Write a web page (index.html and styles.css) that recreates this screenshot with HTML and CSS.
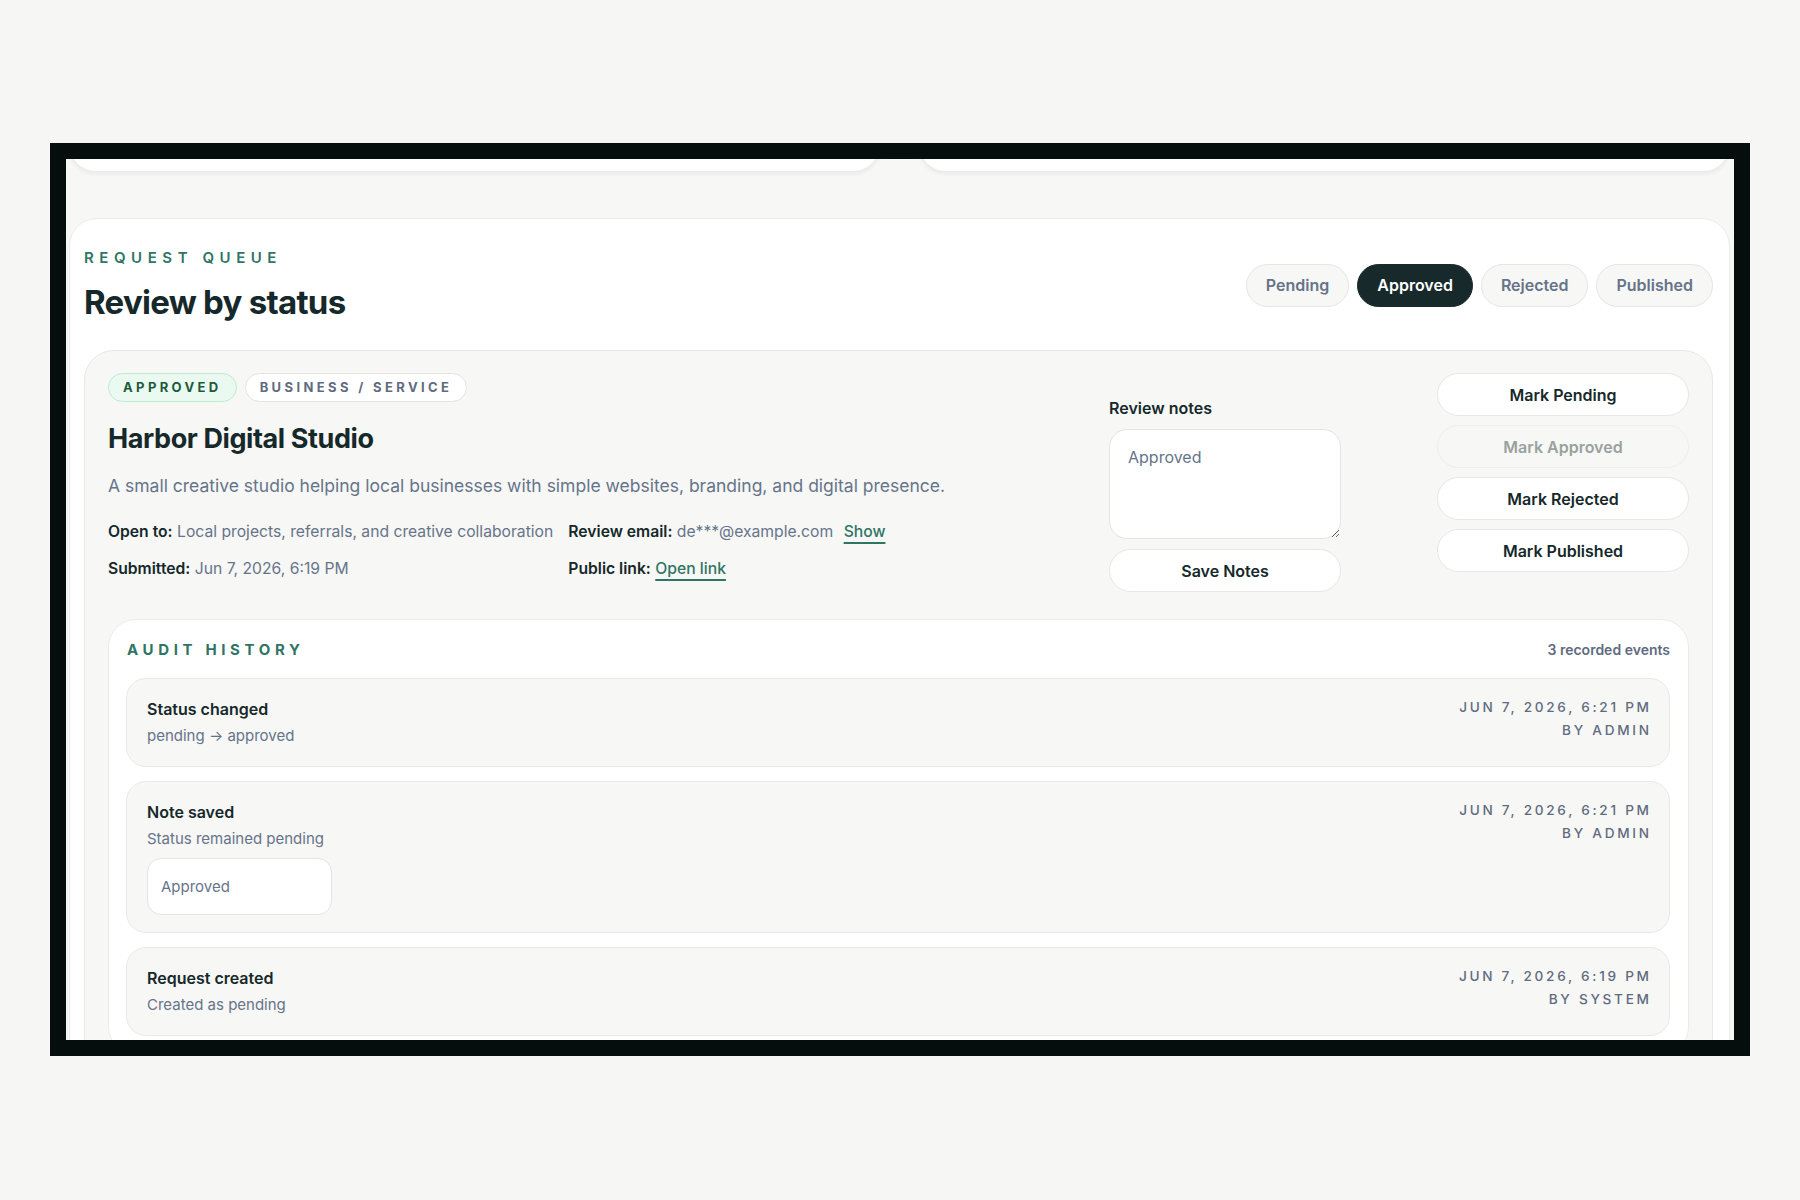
FILE: index.html
```html
<!DOCTYPE html>
<html lang="en">
<head>
  <meta charset="UTF-8">
  <meta name="viewport" content="width=device-width, initial-scale=1.0">
  <title>Request queue – Review by status</title>
  <link rel="stylesheet" href="styles.css">
</head>
<body>
  <div class="frame">
    <div class="viewport">
      <div class="top-cards">
        <div class="stub"></div>
        <div class="stub"></div>
      </div>

      <section class="panel">
        <header class="panel-head">
          <div>
            <p class="eyebrow">Request queue</p>
            <h1>Review by status</h1>
          </div>
          <nav class="tabs">
            <button class="tab">Pending</button>
            <button class="tab active">Approved</button>
            <button class="tab">Rejected</button>
            <button class="tab">Published</button>
          </nav>
        </header>

        <article class="request">
          <div class="request-main">
            <div class="request-info">
              <div class="badges">
                <span class="badge badge-green">Approved</span>
                <span class="badge">Business / Service</span>
              </div>
              <h2>Harbor Digital Studio</h2>
              <p class="desc">A small creative studio helping local businesses with simple websites, branding, and digital presence.</p>
              <div class="meta">
                <div><b>Open to:</b> Local projects, referrals, and creative collaboration</div>
                <div><b>Review email:</b> de***@example.com <a href="#" class="link show">Show</a></div>
                <div><b>Submitted:</b> Jun 7, 2026, 6:19 PM</div>
                <div><b>Public link:</b> <a href="#" class="link">Open link</a></div>
              </div>
            </div>

            <div class="notes">
              <label for="notes">Review notes</label>
              <textarea id="notes">Approved</textarea>
              <button class="btn">Save Notes</button>
            </div>

            <div class="actions">
              <button class="btn">Mark Pending</button>
              <button class="btn" disabled>Mark Approved</button>
              <button class="btn">Mark Rejected</button>
              <button class="btn">Mark Published</button>
            </div>
          </div>

          <div class="audit">
            <div class="audit-head">
              <span class="audit-title">Audit history</span>
              <span class="audit-count">3 recorded events</span>
            </div>
            <div class="events">
              <div class="event">
                <div>
                  <div class="event-title">Status changed</div>
                  <div class="event-sub">pending → approved</div>
                </div>
                <div class="event-time">
                  <div>Jun 7, 2026, 6:21 PM</div>
                  <div>by admin</div>
                </div>
              </div>
              <div class="event">
                <div>
                  <div class="event-title">Note saved</div>
                  <div class="event-sub">Status remained pending</div>
                  <div class="note-box">Approved</div>
                </div>
                <div class="event-time">
                  <div>Jun 7, 2026, 6:21 PM</div>
                  <div>by admin</div>
                </div>
              </div>
              <div class="event">
                <div>
                  <div class="event-title">Request created</div>
                  <div class="event-sub">Created as pending</div>
                </div>
                <div class="event-time">
                  <div>Jun 7, 2026, 6:19 PM</div>
                  <div>by system</div>
                </div>
              </div>
            </div>
          </div>
        </article>
      </section>
    </div>
  </div>
</body>
</html>
```

FILE: styles.css
```css
body {
  margin: 0;
  background-color: #f6f7f4;
  font-family: Inter, "Noto Sans", sans-serif;
  color: #15282a;
}

/* dark frame around the captured page */
.frame {
  box-sizing: border-box;
  width: 1700px;
  height: 913px;
  margin: 143px 0 0 50px;
  border: 16px solid #060d0d;
  overflow: hidden;
}
.viewport {
  height: 100%;
  background-color: #f7f7f5;
  padding: 0 4px 0 3px;
  overflow: hidden;
}

.top-cards {
  display: grid;
  grid-template-columns: 1fr 1fr;
  gap: 39px;
  margin-top: -40px;
}
.stub {
  height: 51px;
  background-color: #fff;
  border: 1px solid #ebebe8;
  border-radius: 28px;
  box-shadow: 0 2px 4px rgba(20, 30, 30, 0.06);
}

.panel {
  margin-top: 46px;
  background-color: #fff;
  border: 1px solid #ebebe7;
  border-radius: 28px;
  padding: 29px 16px 0 14px;
}
.panel-head {
  display: flex;
  justify-content: space-between;
  align-items: center;
}
.eyebrow {
  margin: 0 0 14px;
  font-size: 15px;
  line-height: 20px;
  font-weight: 600;
  letter-spacing: 0.37em;
  text-transform: uppercase;
  color: #2f7566;
}
h1 {
  margin: 0;
  font-size: 33px;
  line-height: 40px;
  font-weight: 700;
  letter-spacing: -0.022em;
}
.tabs {
  display: flex;
  gap: 8px;
}
.tab {
  font-family: inherit;
  font-size: 16px;
  line-height: 23px;
  font-weight: 600;
  padding: 9px 19px;
  border: 1px solid #e4e6e2;
  border-radius: 22px;
  background-color: #f7f7f5;
  color: #667389;
}
.tab.active {
  background-color: #17292b;
  border-color: #17292b;
  color: #fff;
}

.request {
  margin-top: 28px;
  background-color: #f7f7f5;
  border: 1px solid #e8e9e5;
  border-radius: 30px;
  padding: 22px 23px 24px;
}
.request-main {
  display: grid;
  grid-template-columns: minmax(0, 1fr) 232px 252px;
  column-gap: 96px;
  align-items: start;
}
.badges {
  display: flex;
  gap: 8px;
}
.badge {
  padding: 5px 14px;
  font-size: 13px;
  line-height: 17px;
  font-weight: 700;
  letter-spacing: 0.26em;
  text-transform: uppercase;
  color: #5f6b80;
  background-color: #fff;
  border: 1px solid #e3e5e1;
  border-radius: 16px;
}
.badge-green {
  color: #1d5a3c;
  background-color: #ebfaf1;
  border-color: #b9ecd0;
}
h2 {
  margin: 20px 0 0;
  font-size: 27px;
  line-height: 34px;
  font-weight: 700;
  letter-spacing: -0.015em;
}
.desc {
  margin: 16px 0 0;
  font-size: 17.5px;
  line-height: 28px;
  color: #66748a;
}
.meta {
  display: grid;
  grid-template-columns: auto auto;
  justify-content: start;
  column-gap: 15px;
  row-gap: 13px;
  margin-top: 20px;
  font-size: 15.7px;
  line-height: 24px;
  color: #66748a;
}
.meta b {
  font-weight: 600;
  color: #15282a;
}
.link {
  color: #2f7566;
  font-weight: 500;
  text-decoration: underline;
  text-decoration-thickness: 2px;
  text-underline-offset: 5px;
}
.show {
  margin-left: 6px;
}

.notes {
  padding-top: 23px;
}
.notes label {
  display: block;
  margin-bottom: 9px;
  font-size: 16px;
  line-height: 24px;
  font-weight: 600;
}
.notes textarea {
  display: block;
  box-sizing: border-box;
  width: 100%;
  height: 110px;
  padding: 15px 18px;
  font-family: inherit;
  font-size: 16px;
  line-height: 24px;
  color: #66748a;
  background-color: #fff;
  border: 1px solid #e3e5e1;
  border-radius: 18px;
}
.btn {
  display: block;
  width: 100%;
  height: 43px;
  font-family: inherit;
  font-size: 16px;
  font-weight: 600;
  color: #15282a;
  background-color: #fff;
  border: 1px solid #e6e8e4;
  border-radius: 22px;
}
.btn:disabled {
  background-color: #f7f7f5;
  border-color: #eeefeb;
  color: #9aa1a1;
}
.notes .btn {
  margin-top: 10px;
}
.actions {
  display: flex;
  flex-direction: column;
  gap: 9px;
}

.audit {
  margin-top: 27px;
  background-color: #fff;
  border: 1px solid #ebebe7;
  border-radius: 28px;
  padding: 20px 18px 18px 17px;
}
.audit-head {
  display: flex;
  justify-content: space-between;
  align-items: center;
  margin-bottom: 18px;
  line-height: 20px;
}
.audit-title {
  padding-left: 1px;
  font-size: 15px;
  font-weight: 700;
  letter-spacing: 0.31em;
  text-transform: uppercase;
  color: #2f7566;
}
.audit-count {
  font-size: 14px;
  font-weight: 600;
  color: #5f6b80;
}
.events {
  display: flex;
  flex-direction: column;
  gap: 14px;
}
.event {
  display: flex;
  justify-content: space-between;
  align-items: flex-start;
  background-color: #f7f7f5;
  border: 1px solid #e9eae6;
  border-radius: 20px;
  padding: 18px 20px 19px;
}
.event-title {
  font-size: 16px;
  line-height: 24px;
  font-weight: 600;
}
.event-sub {
  margin-top: 4px;
  font-size: 15px;
  line-height: 22px;
  color: #66748a;
}
.event-time {
  margin-right: -0.2em;
  text-align: right;
  font-size: 13.6px;
  line-height: 20px;
  font-weight: 500;
  letter-spacing: 0.2em;
  text-transform: uppercase;
  color: #5f6b80;
}
.event-time div + div {
  margin-top: 3px;
}
.note-box {
  box-sizing: border-box;
  display: flex;
  align-items: center;
  width: 185px;
  height: 57px;
  margin: 8px 0 -2px;
  padding: 0 13px;
  font-size: 15px;
  color: #66748a;
  background-color: #fff;
  border: 1px solid #e3e5e1;
  border-radius: 14px;
}
```
